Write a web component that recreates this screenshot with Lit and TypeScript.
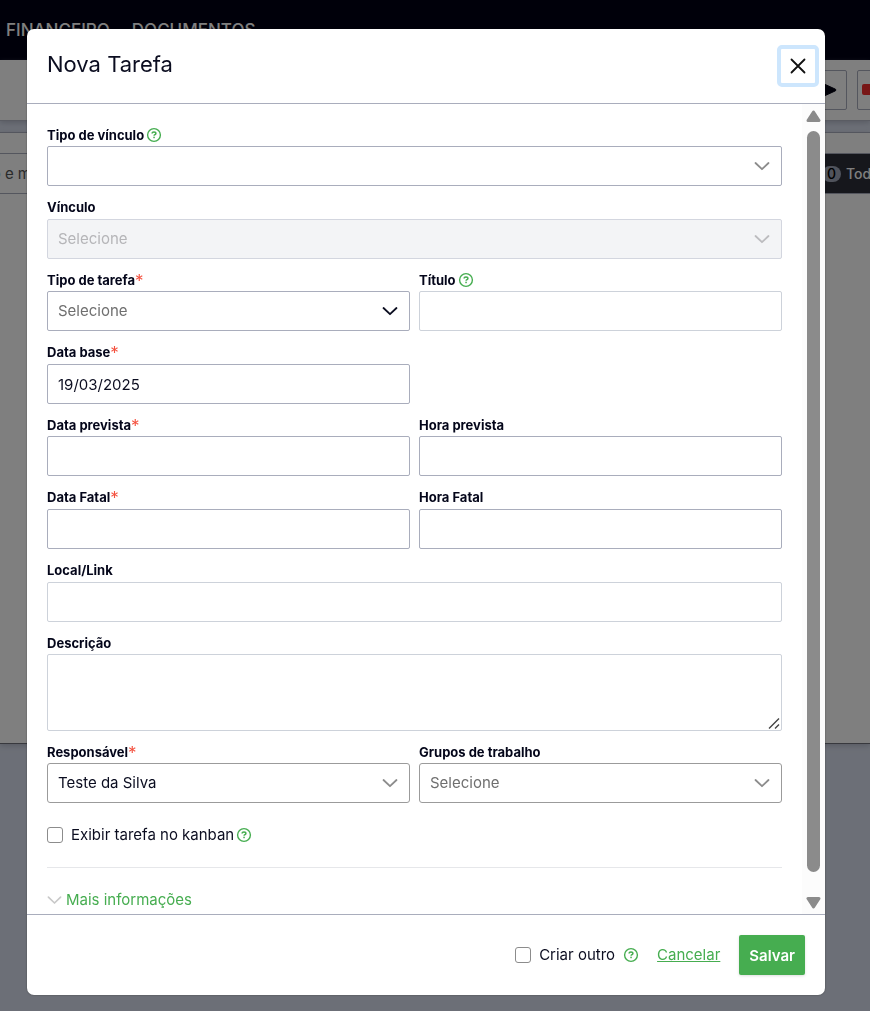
import { LitElement, html, css, svg, nothing } from "lit";
import { customElement, property } from "lit/decorators.js";

const helpIcon = html`<svg class="help" viewBox="0 0 16 16" width="16" height="16" aria-hidden="true">
  <circle cx="8" cy="8" r="6.4" fill="none" stroke="#46ad50" stroke-width="1.4" />
  <path d="M6.1 6.6C6.1 5.5 6.9 4.9 8 4.9s1.9.6 1.9 1.5c0 1.2-1.8 1.2-1.8 2.4" fill="none" stroke="#46ad50" stroke-width="1.5" />
  <rect x="7.3" y="9.7" width="1.5" height="1.5" fill="#46ad50" />
</svg>`;

const chevron = (cls: string) => html`<svg class="chevron ${cls}" viewBox="0 0 16 16" width="16" height="16" aria-hidden="true">
  ${svg`<path d="M1.500 5 8 11.200l6.500-6.200" fill="none" stroke="currentColor" stroke-width="1.800" stroke-linecap="round" stroke-linejoin="round" />`}
</svg>`;

const controls = css`
  * { box-sizing: border-box; }
  input, select, textarea, button { font: inherit; color: inherit; margin: 0; }
  .help { display: block; flex: none; }
  .chevron { display: block; flex: none; color: #8c8c8c; }
`;

@customElement("form-field")
class FormField extends LitElement {
  @property() label = "";
  @property() kind = "text";
  @property() value = "";
  @property() tone = "strong";
  @property({ type: Boolean }) placeholder = false;
  @property({ type: Boolean }) required = false;
  @property({ type: Boolean }) help = false;
  @property({ type: Boolean }) disabled = false;

  static styles = [controls, css`
    :host { display: flex; flex-direction: column; justify-content: space-between; min-width: 0; }
    .caption { display: flex; align-items: center; gap: 2px; height: 22px; flex: none; }
    label { font-size: 13px; line-height: 22px; font-weight: 700; color: #04061a; }
    .star { color: #f4513f; font-weight: 400; font-size: 17px; line-height: 12px; vertical-align: -2px; }
    .box { display: grid; height: 40px; align-items: center; }
    .box.area { height: 77px; }
    .control {
      grid-area: 1 / 1; width: 100%; height: 100%; padding: 0 10px; outline: none;
      border: 1px solid #a9adbc; border-radius: 2px; background: #fff;
      font-size: 15px; line-height: 20px; color: #0b0d20; appearance: none;
    }
    .soft { border-color: #cdd2da; }
    .gray { border-color: #9b9b9b; border-radius: 3px; }
    .control.empty { color: #6f6f6f; }
    .control:disabled { background: #f3f4f6; border-color: #d3d6df; color: #b5b5b8; opacity: 1; }
    textarea.control { display: block; resize: none; padding: 10px; }
    .chevron { grid-area: 1 / 1; justify-self: end; margin-right: 12px; pointer-events: none; }
    .chevron.ink { color: #0b0d20; }
    .chevron.pale { color: #bcbcbf; }
    .grip { grid-area: 1 / 1; place-self: end; margin: 2px; pointer-events: none; }
  `];

  private control() {
    if (this.kind === "select") {
      const look = this.disabled ? "pale" : this.tone === "dark" ? "ink" : "";
      return html`<select id="c" class="control ${this.tone} ${this.placeholder ? "empty" : ""}" ?disabled=${this.disabled}>
          <option>${this.value}</option>
        </select>${chevron(look)}`;
    }
    if (this.kind === "textarea") {
      return html`<textarea id="c" class="control ${this.tone}"></textarea>
        <svg class="grip" viewBox="0 0 12 12" width="12" height="12" aria-hidden="true">
          <path d="M1 11.500 11 1.500M7 11.500l4-4" stroke="#444" stroke-width="1.400" fill="none" />
        </svg>`;
    }
    return html`<input id="c" type="text" class="control ${this.tone}" .value=${this.value} />`;
  }

  render() {
    return html`
      <div class="caption">
        <label for="c">${this.label}${this.required ? html`<span class="star">*</span>` : nothing}</label>
        ${this.help ? helpIcon : nothing}
      </div>
      <div class="box ${this.kind === "textarea" ? "area" : ""}">${this.control()}</div>`;
  }
}

@customElement("app-root")
class AppRoot extends LitElement {
  static styles = [controls, css`
    :host { display: block; font-family: Inter, "Open Sans", sans-serif; color: #0b0d20; }
    .page { height: 100vh; overflow: hidden; background: #d9dfee; display: flex; flex-direction: column; }
    .nav { height: 60px; flex: none; background: #000015; display: flex; align-items: center; gap: 22px; padding: 0 6px; }
    .nav a { color: #fff; text-decoration: none; font-size: 17px; line-height: 24px; font-weight: 500; }
    .tools { height: 61px; flex: none; background: #fff; border-bottom: 1px solid #b5b9c6; box-shadow: 0 2px 5px #8f95a580;
      display: flex; justify-content: flex-end; align-items: center; gap: 10px; overflow: hidden; }
    .tool { width: 40px; height: 40px; flex: none; padding: 0; display: grid; place-items: center;
      background: #fff; border: 1px solid #a9adbc; border-radius: 2px; }
    .tool:last-child { margin-right: -27px; }
    .panel { margin-top: 11px; height: 612px; flex: none; background: #fff; padding-top: 20px;
      border-top: 1px solid #a9adbc; border-bottom: 1px solid #70737d; box-shadow: 0 2px 5px #8f95a580; }
    .row { display: flex; justify-content: space-between; height: 41px; border-top: 1px solid #a9adbc; border-bottom: 1px solid #a9adbc; }
    .query { width: 31px; display: flex; justify-content: flex-end; align-items: center; overflow: hidden; white-space: nowrap; font-size: 15px; color: #555; }
    .tabs { width: 70px; padding-left: 22px; background: #2c2e38; color: #fff; display: flex; align-items: center; gap: 5px;
      font-size: 14px; font-weight: 500; white-space: nowrap; }
    .count { flex: none; width: 19px; height: 16px; border-radius: 8px; background: #a0a7b8; color: #000; display: grid; place-items: center; font-size: 14px; line-height: 16px; }

    .backdrop { position: fixed; inset: 0; background: rgba(0, 0, 0, 0.5); display: flex; justify-content: center; padding: 29px 45px 16px 27px; }
    .dialog { width: 100%; max-width: 798px; background: #fff; border-radius: 7px; overflow: hidden;
      display: flex; flex-direction: column; box-shadow: 0 0 2px #0006; }
    .head { display: flex; justify-content: space-between; align-items: flex-start; height: 75px; flex: none;
      padding: 16px 6px 0 20px; border-bottom: 1px solid #a9adbc; }
    .head h1 { margin: 0; font-size: 22px; line-height: 38px; font-weight: 400; }
    .close { width: 42px; height: 42px; padding: 0; background: #fff; border: 4px solid #cde6fd; border-radius: 5px; display: grid; place-items: center; }
    .body { flex: 1; min-height: 0; display: flex; }
    form { flex: 1; min-width: 0; overflow: hidden; padding: 20px 20px 0; }
    .fields { display: grid; grid-template-columns: 1fr 1fr; column-gap: 9px; row-gap: 10px;
      grid-template-rows: repeat(3, minmax(62px, auto) minmax(63px, auto)) minmax(63px, auto) minmax(99px, auto) minmax(62px, auto); }
    .wide { grid-column: 1 / -1; }
    .first { grid-column: 1; }
    .check { display: flex; align-items: center; font-size: 15px; line-height: 24px; }
    .check label { padding: 0 2px 0 8px; }
    .check input { appearance: none; flex: none; width: 16px; height: 16px; border: 1px solid #8c8c8c; border-radius: 3px; background: #fff; }
    .kanban { margin-top: 20px; height: 24px; }
    hr { border: 0; border-top: 1px solid #e6e7ea; margin: 20px 0; }
    .more { display: flex; align-items: center; gap: 4px; padding: 0; border: 0; background: none; color: #46ad50; font-size: 15px; line-height: 24px; }
    .more .chevron { color: #c9c9c9; width: 15px; }
    .bar { width: 23px; flex: none; background: #fcfcfc; display: flex; flex-direction: column; align-items: center; padding: 6px 0 5px; }
    .bar svg { display: block; flex: none; }
    .thumb { width: 13px; border-radius: 7px; background: #8b8b8b; flex: 740; margin-top: 8px; }
    .rest { flex: 24; }
    .foot { height: 81px; flex: none; border-top: 1px solid #a9adbc; display: flex; align-items: center; justify-content: flex-end; padding: 0 20px; }
    .foot .check label { padding-right: 8px; }
    .cancel { margin: 0 19px 0 18px; color: #46ad50; font-size: 15px; line-height: 24px; text-decoration: underline; }
    .save { height: 40px; padding: 0 10px; border: 0; border-radius: 2px; background: #46ad50; color: #fff; font-size: 15px; font-weight: 600; box-shadow: 0 1px 3px #0002; }
  `];

  render() {
    return html`
      <div class="page">
        <nav class="nav"><a href="#">FINANCEIRO</a><a href="#">DOCUMENTOS</a></nav>
        <div class="tools">
          <button class="tool" aria-label="Iniciar">
            <svg viewBox="0 0 20 16" width="20" height="16"><path d="M6 1.500v13L18.500 8.800q.8-.8 0-1.600Z" fill="#000010" stroke="#000010" stroke-linejoin="round" /></svg>
          </button>
          <button class="tool" aria-label="Vídeo">
            <svg viewBox="0 0 30 12" width="30" height="12"><rect width="20" height="11" rx="2" fill="#f02d2d" /><path d="M21 5l7-4v10l-7-4Z" fill="#f02d2d" /></svg>
          </button>
        </div>
        <div class="panel">
          <div class="row">
            <div class="query">o e m</div>
            <div class="tabs"><span class="count">0</span><span>Tod</span></div>
          </div>
        </div>
      </div>

      <div class="backdrop">
        <section class="dialog" role="dialog" aria-modal="true" aria-labelledby="title">
          <header class="head">
            <h1 id="title">Nova Tarefa</h1>
            <button class="close" aria-label="Fechar">
              <svg viewBox="0 0 16 16" width="16" height="16"><path d="M1.500 1.500l13 13M14.500 1.500l-13 13" stroke="#111" stroke-width="1.800" stroke-linecap="round" /></svg>
            </button>
          </header>
          <div class="body">
            <form>
              <div class="fields">
                <form-field class="wide" label="Tipo de vínculo" kind="select" help></form-field>
                <form-field class="wide" label="Vínculo" kind="select" value="Selecione" disabled></form-field>
                <form-field label="Tipo de tarefa" kind="select" tone="dark" value="Selecione" placeholder required></form-field>
                <form-field label="Título" tone="soft" help></form-field>
                <form-field class="first" label="Data base" value="19/03/2025" required></form-field>
                <form-field class="first" label="Data prevista" required></form-field>
                <form-field label="Hora prevista"></form-field>
                <form-field label="Data Fatal" required></form-field>
                <form-field label="Hora Fatal"></form-field>
                <form-field class="wide" label="Local/Link" tone="soft"></form-field>
                <form-field class="wide" label="Descrição" kind="textarea" tone="soft"></form-field>
                <form-field label="Responsável" kind="select" tone="gray" value="Teste da Silva" required></form-field>
                <form-field label="Grupos de trabalho" kind="select" tone="gray" value="Selecione" placeholder></form-field>
              </div>
              <div class="check kanban"><input type="checkbox" id="kanban" /><label for="kanban">Exibir tarefa no kanban</label>${helpIcon}</div>
              <hr />
              <button type="button" class="more">${chevron("")}Mais informações</button>
            </form>
            <div class="bar" aria-hidden="true">
              <svg viewBox="0 0 15 13" width="15" height="13"><path d="M7.500 2 13 10.500H2Z" fill="#8b8b8b" stroke="#8b8b8b" stroke-width="3" stroke-linejoin="round" /></svg>
              <div class="thumb"></div>
              <div class="rest"></div>
              <svg viewBox="0 0 15 13" width="15" height="13"><path d="M2 2.500h11L7.500 11Z" fill="#8b8b8b" stroke="#8b8b8b" stroke-width="3" stroke-linejoin="round" /></svg>
            </div>
          </div>
          <footer class="foot">
            <div class="check"><input type="checkbox" id="another" /><label for="another">Criar outro</label>${helpIcon}</div>
            <a class="cancel" href="#">Cancelar</a>
            <button class="save">Salvar</button>
          </footer>
        </section>
      </div>`;
  }
}
